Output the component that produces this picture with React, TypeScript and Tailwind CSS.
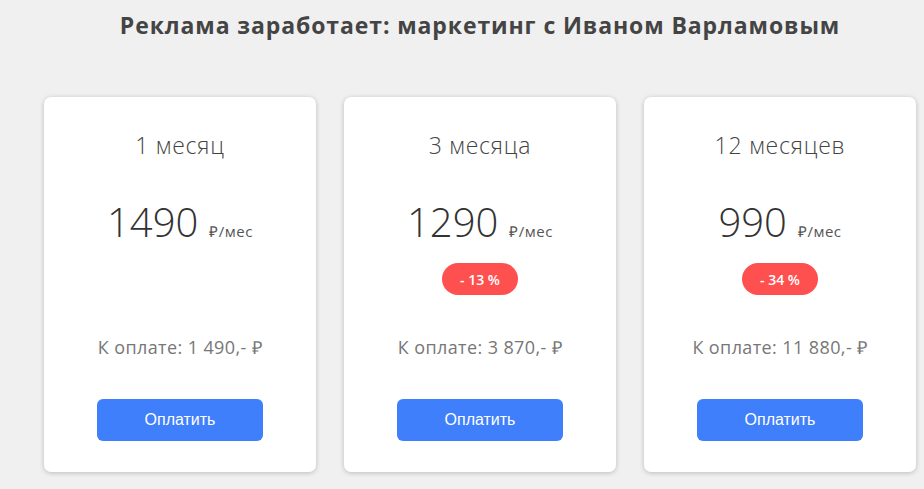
import React from "react";

type Plan = { title: string; price: string; badge?: string; total: string };

const plans: Plan[] = [
  { title: "1 месяц", price: "1490", total: "К оплате: 1 490,- ₽" },
  { title: "3 месяца", price: "1290", badge: "- 13 %", total: "К оплате: 3 870,- ₽" },
  { title: "12 месяцев", price: "990", badge: "- 34 %", total: "К оплате: 11 880,- ₽" },
];

function Card({ p }: { p: Plan }) {
  return (
    <div className="w-[272px] h-[375px] bg-white rounded-[7px] shadow-[0_1px_5px_rgba(0,0,0,0.22)] flex flex-col items-center font-['Open_Sans',sans-serif]">
      <div className="mt-[33px] h-[30px] leading-[30px] text-[23px] font-light tracking-[0.8px] text-[#444]">{p.title}</div>
      <div className="mt-[37px] h-[50px] flex items-baseline justify-center text-[#333]">
        <span className="text-[40px] leading-[50px] font-light">{p.price}</span>
        <span className="ml-[11px] text-[15px] tracking-[0.5px] text-[#555]">₽/мес</span>
      </div>
      <div className="mt-[16px] h-[32px]">
        {p.badge && (
          <div className="h-[32px] w-[76px] rounded-full bg-[#ff5050] text-white text-[14px] font-semibold flex items-center justify-center">
            {p.badge}
          </div>
        )}
      </div>
      <div className="mt-[40px] h-[24px] leading-[24px] text-[18px] tracking-[0.4px] text-[#777]">{p.total}</div>
      <button className="mt-[40px] w-[166px] h-[42px] rounded-[6px] bg-[#3f7ffc] text-white text-[16px] font-['Liberation_Sans',Arial,sans-serif]">
        Оплатить
      </button>
    </div>
  );
}

export default function App() {
  return (
    <div className="w-[924px] h-[489px] bg-[#f0f0f0] overflow-hidden">
      <div className="pl-[36px] pt-[8px] h-[40px] text-center text-[23px] font-bold tracking-[0.9px] text-[#444] font-['Open_Sans',sans-serif] leading-[34px]">
        Реклама заработает: маркетинг с Иваном Варламовым
      </div>
      <div className="mt-[57px] pl-[44px] flex gap-[28px]">
        {plans.map((p) => (
          <Card key={p.title} p={p} />
        ))}
      </div>
    </div>
  );
}
